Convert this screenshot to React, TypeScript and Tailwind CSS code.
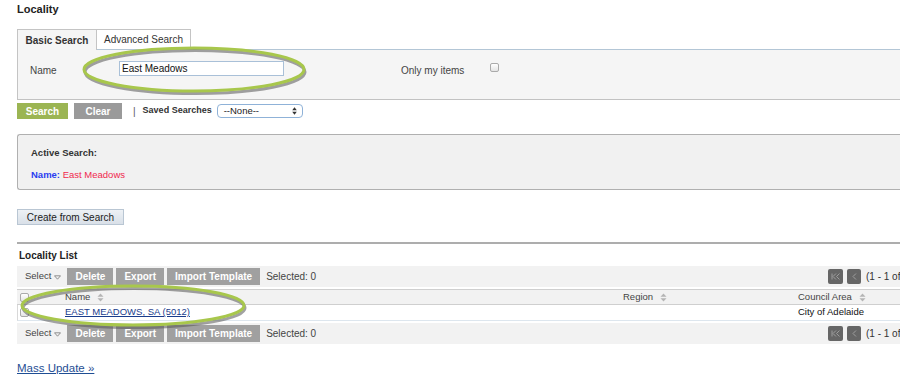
import React from 'react';

// Small helpers for the legacy-style admin page
const SortIcon: React.FC = () => (
    <svg width="7" height="9" viewBox="0 0 7 9" className="ml-[7px] inline-block">
        <path d="M3.5 0.5 L6.5 3.8 L0.5 3.8 Z" fill="#b5b5b5" />
        <path d="M0.5 5.2 L6.5 5.2 L3.5 8.5 Z" fill="#b5b5b5" />
    </svg>
);

const Checkbox: React.FC = () => (
    <span className="inline-block w-[9px] h-[9px] rounded-[2px] border border-[#aaa] bg-gradient-to-b from-white to-[#e4e4e4]" />
);

const SelectMenu: React.FC = () => (
    <span className="flex items-center text-[#444] mr-[6px]">
        Select
        <svg width="7" height="5" viewBox="0 0 7 5" className="ml-[3px] mt-[2px]">
            <path d="M0.5 0.8 L6.5 0.8 L3.5 4.2 Z" fill="none" stroke="#777" strokeWidth="0.8" />
        </svg>
    </span>
);

const GrayButton: React.FC<{ label: string }> = ({ label }) => (
    <span className="h-[17px] px-[8px] flex items-center bg-[#a0a0a0] text-white text-[10px] font-bold">{label}</span>
);

const Pager: React.FC = () => (
    <div className="ml-auto w-[72px] shrink-0 flex items-center whitespace-nowrap">
        <span className="shrink-0 w-[15px] h-[15px] rounded-[2px] bg-[#666] flex items-center justify-center">
            <svg width="9" height="7" viewBox="0 0 9 7">
                <path d="M1 0.5 V6.5" stroke="#9d9d9d" strokeWidth="1" />
                <path d="M5 0.5 L2 3.5 L5 6.5 M8.5 0.5 L5.5 3.5 L8.5 6.5" fill="none" stroke="#9d9d9d" strokeWidth="1" />
            </svg>
        </span>
        <span className="shrink-0 ml-[4px] w-[14px] h-[15px] rounded-[2px] bg-[#666] flex items-center justify-center">
            <svg width="5" height="7" viewBox="0 0 5 7">
                <path d="M4 0.5 L1 3.5 L4 6.5" fill="none" stroke="#9d9d9d" strokeWidth="1" />
            </svg>
        </span>
        <span className="shrink-0 ml-[5px] text-[#333] text-[10px]">(1 - 1 of 1)</span>
    </div>
);

const Toolbar: React.FC = () => (
    <div className="h-[21px] bg-[#f2f2f2] flex items-center pl-[8px] text-[9.5px]">
        <SelectMenu />
        <div className="flex gap-[3px]">
            <GrayButton label="Delete" />
            <GrayButton label="Export" />
            <GrayButton label="Import Template" />
        </div>
        <span className="ml-[6px] text-[#444] text-[10px]">Selected: 0</span>
        <Pager />
    </div>
);

const Ellipse: React.FC<{ className: string; w: number; h: number }> = ({ className, w, h }) => (
    <svg width={w + 10} height={h + 10} className={`absolute pointer-events-none ${className}`}>
        <ellipse cx={(w + 10) / 2 + 1} cy={(h + 10) / 2 + 2.5} rx={w / 2} ry={h / 2} fill="none" stroke="#555" strokeOpacity="0.55" strokeWidth="3" />
        <ellipse cx={(w + 10) / 2} cy={(h + 10) / 2} rx={w / 2} ry={h / 2} fill="none" stroke="#a8c74c" strokeWidth="3" />
    </svg>
);

export default function App() {
    return (
        <div className="relative w-[900px] h-[390px] overflow-hidden bg-white text-[#333] font-['Liberation_Sans',Arial,sans-serif]">
            <div className="pl-[17px] pt-[1px] h-[29px] text-[11px] font-bold text-[#222]">Locality</div>

            {/* Tabs */}
            <div className="pl-[17px] flex h-[20px] text-[10px]">
                <div className="w-[80px] h-[21px] border border-b-0 border-[#c4c4c4] bg-[#f5f5f5] flex items-center justify-center font-bold text-[#333] relative z-10">Basic Search</div>
                <div className="w-[94px] h-[20px] border border-b-0 border-l-0 border-[#c4c4c4] bg-white flex items-center justify-center text-[#333]">Advanced Search</div>
            </div>

            {/* Search panel */}
            <div className="ml-[17px] h-[51px] bg-[#f5f5f5] border-t border-t-[#b3c6d6] border-b border-b-[#c2c2c2] border-l border-l-[#c4c4c4] flex items-start pt-[11px] text-[10px]">
                <span className="ml-[12px] w-[89px] mt-[2px] text-[#444]">Name</span>
                <div className="w-[165px] h-[15px] bg-white border border-[#a9c0d8] flex items-center px-[2px] text-[10px] text-[#111]">East Meadows</div>
                <span className="ml-[117px] w-[89px] mt-[2px] text-[#444]">Only my items</span>
                <span className="mt-[0px]"><Checkbox /></span>
            </div>

            {/* Buttons row */}
            <div className="pl-[17px] mt-[3px] h-[16px] flex items-center text-[10px]">
                <span className="w-[51px] h-[16px] bg-[#9bb553] text-white font-bold flex items-center justify-center">Search</span>
                <span className="ml-[6px] w-[48px] h-[16px] bg-[#9a9a9a] text-white font-bold flex items-center justify-center">Clear</span>
                <span className="ml-[11px] text-[#555]">|</span>
                <span className="ml-[7px] font-bold text-[9px] text-[#333]">Saved Searches</span>
                <span className="ml-[5px] w-[86px] h-[14px] rounded-[4px] border border-[#8fb2d8] bg-white flex items-center pl-[6px] pr-[5px] text-[#222] text-[9.5px]">
                    --None--
                    <svg width="5" height="8" viewBox="0 0 5 8" className="ml-auto">
                        <path d="M2.5 0.3 L4.8 3.2 L0.2 3.2 Z M0.2 4.8 L4.8 4.8 L2.5 7.7 Z" fill="#333" />
                    </svg>
                </span>
            </div>

            {/* Active search */}
            <div className="ml-[17px] mt-[15px] h-[56px] bg-[#f1f1f1] border border-r-0 border-[#b0b0b0] rounded-l-[3px] pl-[13px] pt-[11px] text-[9.5px]">
                <div className="font-bold text-[#333]">Active Search:</div>
                <div className="mt-[8px] font-bold">
                    <span className="text-[#2a3df0]">Name: </span>
                    <span className="text-[#f0284e] font-normal">East Meadows</span>
                </div>
            </div>

            {/* Create from search */}
            <div className="pl-[17px] mt-[19px] h-[16px] flex">
                <span className="flex w-[107px] h-[16px] items-center justify-center bg-gradient-to-b from-[#edf1f5] to-[#d9e0e8] border border-[#b9c6d3] text-[10px] text-[#222]">Create from Search</span>
            </div>

            <div className="ml-[17px] mt-[17px] h-[2px] bg-[#adadad]" />

            {/* Locality list */}
            <div className="pl-[19px] h-[22px] flex items-center text-[10px] font-bold text-[#222]">Locality List</div>

            <div className="ml-[17px]">
                <Toolbar />
                <div className="h-[2px]" />
                <div className="h-[16px] flex items-center bg-[#f2f2f2] border-t border-b border-[#cfcfcf] text-[9.5px] text-[#444]">
                    <span className="w-[48px] pl-[3px] flex"><Checkbox /></span>
                    <span className="w-[558px] flex items-center">Name<SortIcon /></span>
                    <span className="w-[175px] flex items-center">Region<SortIcon /></span>
                    <span className="flex items-center">Council Area<SortIcon /></span>
                </div>
                <div className="h-[16px] flex items-center bg-white border-l border-b border-l-[#d8d8d8] border-b-[#dde6ee] text-[9.5px]">
                    <span className="w-[47px] pl-[2px] flex"><Checkbox /></span>
                    <span className="w-[558px] text-[#1a3c8c] underline">EAST MEADOWS, SA (5012)</span>
                    <span className="w-[175px]" />
                    <span className="text-[#111]">City of Adelaide</span>
                </div>
                <div className="h-[2px]" />
                <Toolbar />
            </div>

            <div className="pl-[17px] mt-[16px] text-[11.5px] text-[#1f4e94] underline">Mass Update »</div>

            <Ellipse className="left-[79px] top-[43px]" w={220} h={43} />
            <Ellipse className="left-[17px] top-[281px]" w={222} h={39} />
        </div>
    );
}
